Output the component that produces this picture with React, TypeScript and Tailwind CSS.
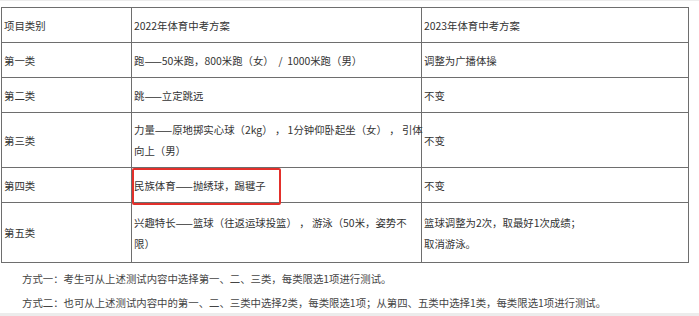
const rows: { name: string; h: string; old: React.ReactNode; next: React.ReactNode; mark?: boolean }[] = [
  { name: '第一类', h: 'h-[35px]', old: '跑——50米跑，800米跑（女） \u00a0/ \u00a01000米跑（男）', next: '调整为广播体操' },
  { name: '第二类', h: 'h-[35px]', old: '跳——立定跳远', next: '不变' },
  {
    name: '第三类',
    h: 'h-[55px]',
    old: (
      <>
        <div>力量——原地掷实心球（2kg） ， 1分钟仰卧起坐（女） ， 引体</div>
        <div>向上（男）</div>
      </>
    ),
    next: '不变',
  },
  { name: '第四类', h: 'h-[35px]', old: '民族体育——抛绣球，踢毽子', next: '不变', mark: true },
  {
    name: '第五类',
    h: 'h-[60px]',
    old: (
      <>
        <div>兴趣特长——篮球（往返运球投篮） ， 游泳（50米，姿势不</div>
        <div>限）</div>
      </>
    ),
    next: (
      <>
        <div>篮球调整为2次，取最好1次成绩；</div>
        <div>取消游泳。</div>
      </>
    ),
  },
]

function Cell({ children, className = '' }: { children: React.ReactNode; className?: string }) {
  return (
    <div className={`relative flex flex-col justify-center border-r border-b border-[#6e6e6e] pl-[2px] leading-[21px] whitespace-nowrap ${className}`}>
      {children}
    </div>
  )
}

export default function App() {
  return (
    <div
      className="w-[699px] h-[316px] overflow-hidden bg-white border-t border-b-[3px] border-[#ececec] text-[10.4px] text-[#333]"
      style={{ fontFamily: '"Noto Sans CJK SC", "Noto Sans", sans-serif' }}
    >
      <div className="ml-[1px] mt-[6px] w-[688px] grid grid-cols-[130px_290px_267px] border-t border-l border-[#6e6e6e]">
        <Cell className="h-[35px]">项目类别</Cell>
        <Cell className="h-[35px]">2022年体育中考方案</Cell>
        <Cell className="h-[35px]">2023年体育中考方案</Cell>
        {rows.map((r) => (
          <div key={r.name} className="contents">
            <Cell className={r.h}>{r.name}</Cell>
            <Cell className={r.h}>
              {r.old}
              {r.mark && (
                <div className="absolute left-0 top-0 w-[149px] h-[37px] border-2 border-[#e3302b] rounded-[2px]" />
              )}
            </Cell>
            <Cell className={r.h}>{r.next}</Cell>
          </div>
        ))}
      </div>
      <div className="pl-[22px] mt-[4px] leading-[24px] text-[#444]">
        <p>方式一：考生可从上述测试内容中选择第一、二、三类，每类限选1项进行测试。</p>
        <p>方式二：也可从上述测试内容中的第一、二、三类中选择2类，每类限选1项；从第四、五类中选择1类，每类限选1项进行测试。</p>
      </div>
    </div>
  )
}
